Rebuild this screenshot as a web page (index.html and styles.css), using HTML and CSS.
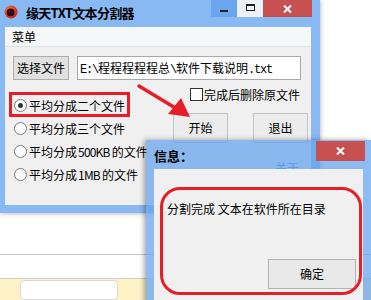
FILE: index.html
```html
<!DOCTYPE html>
<html lang="zh-CN">
<head>
<meta charset="utf-8">
<title>缘天TXT文本分割器</title>
<link rel="stylesheet" href="styles.css">
</head>
<body>
<div class="desk">
  <div class="backapp">
    <div class="ba-spacer"></div>
    <div class="ba-row"></div>
    <div class="ba-foot"><div class="ba-tab"></div></div>
  </div>

  <div class="win main">
    <div class="titlebar">
      <svg class="appicon" viewBox="0 0 14 14">
        <defs>
          <radialGradient id="g1" cx="0.35" cy="0.35" r="0.7">
            <stop offset="0" stop-color="#ff7a3a"/>
            <stop offset="1" stop-color="#c81e1e"/>
          </radialGradient>
        </defs>
        <circle cx="7" cy="7" r="6.5" fill="url(#g1)"/>
        <circle cx="6.6" cy="7.4" r="3.9" fill="#2b0a12"/>
        <circle cx="5.4" cy="6.2" r="1" fill="#5a2030"/>
      </svg>
      <span class="title">缘天TXT文本分割器</span>
      <div class="caps">
        <div class="cap min"><span class="min-glyph"></span></div>
        <div class="cap max"><span class="max-glyph"></span></div>
        <div class="cap close">
          <svg class="x-glyph" viewBox="0 0 9 8"><path d="M1 0.5 L8 7.5 M8 0.5 L1 7.5" stroke="#fff" stroke-width="2"/></svg>
        </div>
      </div>
    </div>
    <div class="client">
      <div class="menubar"><span>菜单</span></div>
      <div class="filerow">
        <button class="btn btn-select">选择文件</button>
        <div class="input"><span class="mono">E:\</span>程程程程程总<span class="mono">\</span>软件下载说明<span class="mono">.txt</span></div>
      </div>
      <div class="options">
        <div class="radios">
          <label class="radio"><span class="rb on"></span>平均分成二个文件</label>
          <label class="radio"><span class="rb"></span>平均分成三个文件</label>
          <label class="radio"><span class="rb"></span>平均分成<span class="half">500KB</span>的文件</label>
          <label class="radio"><span class="rb"></span>平均分成<span class="half">1MB</span>的文件</label>
        </div>
        <div class="actions">
          <label class="check"><span class="cb"></span>完成后删除原文件</label>
          <div class="btnrow">
            <button class="btn btn-act">开始</button>
            <button class="btn btn-act">退出</button>
          </div>
          <span class="about">关于</span>
        </div>
      </div>
    </div>
  </div>

  <div class="hl-box"></div>
  <svg class="arrow" viewBox="0 0 371 300">
    <path d="M139 86 L177 109" stroke="#e61e28" stroke-width="3.5" stroke-linecap="round"/>
    <polygon points="190,117 168,114 181,98" fill="#e61e28"/>
  </svg>

  <div class="win dialog">
    <div class="d-title">
      <span class="d-title-text">信息：</span>
      <div class="cap close d-close">
        <svg class="x-glyph" viewBox="0 0 9 8"><path d="M1 0.5 L8 7.5 M8 0.5 L1 7.5" stroke="#fff" stroke-width="2"/></svg>
      </div>
    </div>
    <div class="d-client">
      <p class="msg">分割完成 文本在软件所在目录</p>
      <div class="d-actions"><button class="btn btn-ok">确定</button></div>
    </div>
    <div class="hl-round"></div>
  </div>
</div>
</body>
</html>
```
FILE: styles.css
```css
html, body {
  margin: 0;
  padding: 0;
}
body {
  width: 371px;
  height: 300px;
  overflow: hidden;
  background: #fff;
  font-family: "Noto Sans CJK SC", "Noto Sans", sans-serif;
  font-size: 12px;
  color: #000;
}
.desk {
  position: relative;
  width: 371px;
  height: 300px;
  overflow: hidden;
}

/* background application */
.backapp {
  position: absolute;
  inset: 0;
  display: flex;
  flex-direction: column;
}
.ba-spacer { height: 267px; }
.ba-row {
  height: 24px;
  border-top: 1px solid #c9c9c9;
}
.ba-foot {
  flex: 1;
  border-top: 1px solid #cfcfcf;
  background: #fff1c6;
  padding: 1px 0 0 20px;
}
.ba-tab {
  width: 98px;
  height: 20px;
  box-sizing: border-box;
  background: #fff;
  border: 1px solid #d8d8d8;
  border-radius: 4px;
}

/* main window */
.main {
  position: absolute;
  left: 0;
  top: 0;
  width: 320px;
  height: 213px;
  background: #89b9f2;
  box-shadow: 0 0 5px rgba(0, 0, 0, .35);
  display: flex;
  flex-direction: column;
}
.titlebar {
  height: 27px;
  display: flex;
  align-items: flex-start;
  flex-shrink: 0;
}
.appicon {
  width: 14px;
  height: 14px;
  margin: 5px 0 0 4px;
}
.title {
  font-weight: bold;
  font-size: 13px;
  line-height: 13px;
  letter-spacing: -0.7px;
  margin: 6px 0 0 8px;
  white-space: nowrap;
}
.caps {
  margin-left: auto;
  margin-right: 8px;
  display: flex;
}
.cap {
  height: 17px;
  display: flex;
  align-items: center;
  justify-content: center;
}
.cap.min { width: 26px; background: #6aa6ee; }
.cap.max { width: 26px; background: #eef1f5; }
.cap.close { width: 49px; background: #c75050; }
.min-glyph {
  width: 8px;
  height: 2px;
  background: #222;
  margin-top: 5px;
}
.max-glyph {
  width: 9px;
  height: 7px;
  box-sizing: border-box;
  border: 1px solid #222;
  border-top-width: 2px;
  margin-top: -2px;
}
.x-glyph {
  width: 9px;
  height: 8px;
  display: block;
}

.client {
  flex: 1;
  margin: 0 9px 8px 5px;
  background: #f0f0f0;
  display: flex;
  flex-direction: column;
  overflow: hidden;
}
.menubar {
  height: 19px;
  line-height: 19px;
  border-bottom: 1px solid #e2e2e2;
  background: #f6f7f8;
  padding-left: 7px;
  flex-shrink: 0;
}
.filerow {
  display: flex;
  gap: 8px;
  padding: 9px 0 0 8px;
}
.btn {
  font-family: inherit;
  font-size: 12px;
  line-height: 12px;
  color: #000;
  padding: 0;
  margin: 0;
  box-sizing: border-box;
}
.btn-select {
  width: 56px;
  height: 24px;
  background: #e1e1e1;
  border: 1px solid #adadad;
}
.input {
  width: 224px;
  height: 24px;
  box-sizing: border-box;
  border: 1px solid #a9a9a9;
  background: #fff;
  padding-left: 2px;
  line-height: 22px;
  white-space: nowrap;
  overflow: hidden;
}
.mono {
  font-family: "Liberation Mono", monospace;
  font-size: 12px;
  letter-spacing: -1.2px;
}
.half {
  letter-spacing: -0.8px;
  margin-left: -1px;
}

.options {
  display: flex;
}
.radios {
  width: 168px;
  box-sizing: border-box;
  padding: 14px 0 0 9px;
  display: flex;
  flex-direction: column;
}
.radio {
  height: 23px;
  display: flex;
  align-items: center;
  gap: 2px;
  white-space: nowrap;
}
.rb {
  width: 13px;
  height: 13px;
  box-sizing: border-box;
  border: 1px solid #777;
  border-radius: 50%;
  background: #fff;
  display: flex;
  align-items: center;
  justify-content: center;
  flex-shrink: 0;
}
.rb.on::after {
  content: "";
  width: 5px;
  height: 5px;
  border-radius: 50%;
  background: #333;
}
.actions {
  padding-top: 8px;
  display: flex;
  flex-direction: column;
}
.check {
  height: 13px;
  padding-left: 17px;
  display: flex;
  align-items: center;
  gap: 1px;
  white-space: nowrap;
}
.cb {
  width: 13px;
  height: 13px;
  box-sizing: border-box;
  border: 1px solid #333;
  background: #fff;
  flex-shrink: 0;
}
.btnrow {
  display: flex;
  gap: 25px;
  margin-top: 12px;
}
.btn-act {
  width: 55px;
  height: 30px;
  background: #ececec;
  border: 1px solid #c4c4c4;
}
.about {
  margin-top: 19px;
  padding-left: 102px;
  color: #2f86e6;
  line-height: 12px;
}

/* annotations */
.hl-box {
  position: absolute;
  left: 9px;
  top: 92px;
  width: 121px;
  height: 25px;
  box-sizing: border-box;
  border: 3px solid #e61e28;
}
.arrow {
  position: absolute;
  left: 0;
  top: 0;
  width: 371px;
  height: 300px;
  pointer-events: none;
}

/* dialog */
.dialog {
  position: absolute;
  left: 146px;
  top: 140px;
  width: 225px;
  height: 170px;
  background: rgba(103, 164, 238, .75);
  box-shadow: -2px 0 5px rgba(0, 0, 0, .35);
  display: flex;
  flex-direction: column;
}
.d-title {
  height: 29px;
  display: flex;
  align-items: flex-start;
  padding-left: 8px;
  flex-shrink: 0;
}
.d-title-text {
  font-weight: bold;
  font-size: 13px;
  line-height: 13px;
  margin-top: 9px;
}
.d-close {
  width: 47px;
  height: 20px;
  margin: 1px 6px 0 auto;
}
.d-client {
  flex: 1;
  margin: 0 8px;
  background: #f0f0f0;
  padding: 34px 7px 0 13px;
}
.msg {
  margin: 0;
  line-height: 12px;
  white-space: nowrap;
}
.d-actions {
  display: flex;
  justify-content: flex-end;
  margin-top: 44px;
}
.btn-ok {
  width: 88px;
  height: 30px;
  background: #e9e9e9;
  border: 1px solid #b4b4b4;
}
.hl-round {
  position: absolute;
  left: 14px;
  top: 47px;
  width: 202px;
  height: 108px;
  box-sizing: border-box;
  border: 3px solid #e61e28;
  border-radius: 20px;
  pointer-events: none;
}
```
